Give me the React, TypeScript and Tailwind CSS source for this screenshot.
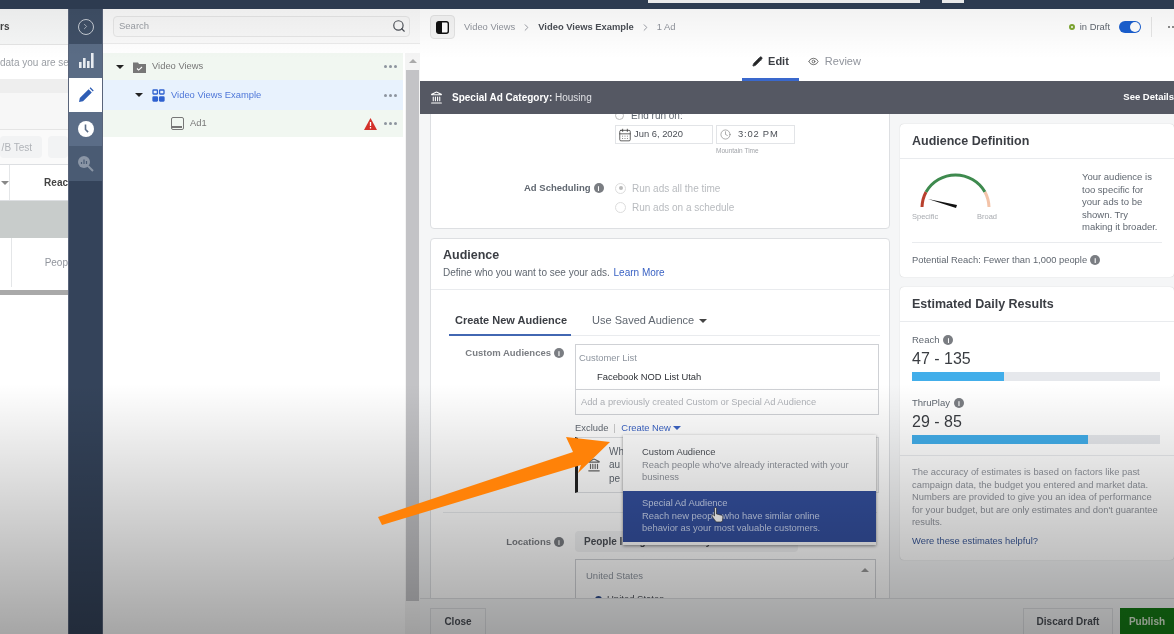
import React from "react";
import { ChevronRight, Search, Pencil, Eye, Clock, Landmark, CalendarDays } from "lucide-react";

const Info = ({ size = "w-[10px] h-[10px]" }: { size?: string }) => (
  <span className={`inline-flex ${size} items-center justify-center rounded-full bg-[#7a7d82] text-[7px] font-bold leading-none text-white`}>i</span>
);

const Dots = () => (
  <span className="flex gap-[2px]">
    <i className="h-[3px] w-[3px] rounded-full bg-[#8d949e]" />
    <i className="h-[3px] w-[3px] rounded-full bg-[#8d949e]" />
    <i className="h-[3px] w-[3px] rounded-full bg-[#8d949e]" />
  </span>
);

const Caret = ({ className = "" }: { className?: string }) => (
  <span className={`inline-block h-0 w-0 border-x-[4px] border-t-[4px] border-x-transparent ${className}`} />
);

function ClippedTable() {
  return (
    <div className="w-[68px] shrink-0 overflow-hidden bg-white text-[#606770]">
      <div className="flex h-[35px] items-center bg-[#f6f7f7] text-[10px] font-bold text-[#444]">rs</div>
      <div className="flex h-[35px] items-center whitespace-nowrap border-t border-[#e4e4e4] text-[10px] text-[#9a9ea4]">data you are se</div>
      <div className="h-[14px] bg-[#eeeeee]" />
      <div className="h-[36px] bg-[#f7f7f7]" />
      <div className="flex h-[35px] items-center gap-[6px] border-t border-[#e5e5e5] bg-[#fafafa]">
        <span className="flex h-[22px] w-[42px] items-center justify-end rounded-sm bg-[#f2f3f4] pr-[10px] text-[10px] text-[#b0b3b8]">/B Test</span>
        <span className="h-[22px] w-[20px] rounded-sm bg-[#f2f3f4]" />
      </div>
      <div className="flex h-[37px] border-y border-[#dddfe2] bg-white">
        <span className="flex w-[14px] items-center justify-center border-r border-[#e4e6e8]"><Caret className="border-t-[#888]" /></span>
        <span className="flex items-center pl-[34px] text-[10px] font-bold text-[#444]">Reac</span>
      </div>
      <div className="h-[37px] bg-[#c8cccb]" />
      <div className="flex h-[49px] bg-white">
        <span className="w-[14px] border-r border-[#e4e6e8]" />
        <span className="flex items-center pl-[33px] text-[10px] text-[#90949c]">Peop</span>
      </div>
      <div className="mt-[3px] h-[5px] bg-[#a9a9a9]" />
    </div>
  );
}

function NavRail() {
  return (
    <div className="flex w-[35px] shrink-0 flex-col border-x border-[#59647a] bg-[#34435a]">
      <div className="flex h-[35px] items-center justify-center bg-[#3f4f66]">
        <span className="flex h-[16px] w-[16px] items-center justify-center rounded-full border-[1.5px] border-[#c6ccd4]">
          <ChevronRight size={9} className="text-[#c6ccd4]" />
        </span>
      </div>
      <div className="flex h-[34px] items-center justify-center bg-[#5a6c85]">
        <svg width="16" height="16" viewBox="0 0 16 16" fill="#e8ecf1">
          <rect x="1" y="9" width="2.6" height="6" />
          <rect x="5" y="5" width="2.6" height="10" />
          <rect x="9" y="8" width="2.6" height="7" />
          <rect x="13" y="0" width="2.6" height="15" />
        </svg>
      </div>
      <div className="flex h-[34px] items-center justify-center bg-white">
        <svg width="16" height="16" viewBox="0 0 16 16" fill="#2f5eb5">
          <path d="M1 15l.8-4L10.6 2.2l3.2 3.2L5 14.2zM11.6 1.2l.9-.9 3.2 3.2-.9.9z" />
        </svg>
      </div>
      <div className="flex h-[34px] items-center justify-center bg-[#5b6d87]">
        <svg width="16" height="16" viewBox="0 0 16 16">
          <circle cx="8" cy="8" r="8" fill="#fff" />
          <path d="M7.5 3.5v5l2.6 2.6" stroke="#5b6d87" strokeWidth="1.6" fill="none" />
        </svg>
      </div>
      <div className="flex h-[35px] items-center justify-center bg-[#4a5b73]">
        <svg width="17" height="17" viewBox="0 0 17 17" fill="none">
          <circle cx="7" cy="7" r="6" fill="#8b96a6" />
          <path d="M11 11l5 5" stroke="#8b96a6" strokeWidth="2" />
          <path d="M4.5 9V7M7 9V4.5M9.5 9V6" stroke="#4a5b73" strokeWidth="1.2" />
        </svg>
      </div>
    </div>
  );
}

function TreePanel() {
  return (
    <div className="flex w-[317px] shrink-0 flex-col bg-white">
      <div className="flex h-[35px] items-center border-b border-[#ebebeb] bg-[#fafafa] pl-[10px] pr-[10px]">
        <div className="flex h-[21px] w-full items-center justify-between rounded-sm border border-[#e6e6e6] bg-[#f8f8f8] pl-[5px] pr-[3px]">
          <span className="text-[9.5px] text-[#9a9ea4]">Search</span>
          <Search size={14} className="text-[#4b4f56]" />
        </div>
      </div>
      <div className="flex min-h-0 flex-1 pt-[9px]">
        <div className="mr-[2px] min-w-0 flex-1">
          <div className="flex h-[27px] items-center bg-[#f1f7f1] pl-[13px] pr-[6px] text-[9.4px] text-[#777]">
            <Caret className="border-t-[#222]" />
            <svg className="ml-[9px]" width="13" height="12" viewBox="0 0 13 12" fill="#777">
              <path d="M0 1.5h5l1 1.5h7v9H0z" />
              <path d="M4 7.5l1.6 1.6L9 6" stroke="#fff" strokeWidth="1.1" fill="none" />
            </svg>
            <span className="ml-[6px] flex-1">Video Views</span>
            <Dots />
          </div>
          <div className="flex h-[30px] items-center bg-[#e8f2fd] pl-[32px] pr-[6px] text-[9.4px] text-[#4f77d8]">
            <Caret className="border-t-[#222]" />
            <svg className="ml-[9px]" width="13" height="13" viewBox="0 0 13 13" fill="none" stroke="#2f62d0" strokeWidth="1.3">
              <rect x="1" y="1" width="4.4" height="4" rx=".5" />
              <rect x="7.6" y="1" width="4.4" height="4" rx=".5" />
              <rect x="1" y="8" width="4.4" height="4" rx=".5" fill="#2f62d0" />
              <rect x="7.6" y="8" width="4.4" height="4" rx=".5" fill="#2f62d0" />
            </svg>
            <span className="ml-[6px] flex-1">Video Views Example</span>
            <Dots />
          </div>
          <div className="flex h-[27px] items-center bg-[#f1f7f1] pl-[68px] pr-[6px] text-[9.4px] text-[#777]">
            <span className="flex h-[13px] w-[13px] items-end justify-end rounded-[2px] border-[1.5px] border-[#777] pb-[1px] pr-[1px]">
              <i className="h-[2px] w-full bg-[#777]" />
            </span>
            <span className="ml-[6px] flex-1">Ad1</span>
            <svg className="mr-[7px]" width="13" height="12" viewBox="0 0 13 12">
              <path d="M6.5 0L13 12H0z" fill="#d3312a" />
              <path d="M6.5 4v4M6.5 9v1.5" stroke="#fff" strokeWidth="1.3" />
            </svg>
            <Dots />
          </div>
        </div>
        <div className="flex w-[15px] shrink-0 flex-col items-center bg-[#f4f4f4] pt-[6px]">
          <span className="h-0 w-0 border-x-[4px] border-b-[4px] border-x-transparent border-b-[#aaa]" />
          <div className="mt-[7px] h-[531px] w-[13px] bg-[#c3c3c6]" />
        </div>
      </div>
    </div>
  );
}

function Gauge() {
  return (
    <svg width="90" height="56" viewBox="0 0 90 56" fill="none">
      <path d="M10 39 A34 34 0 0 1 14 24" stroke="#b8402d" strokeWidth="3" />
      <path d="M14 24 A34 34 0 0 1 73 24" stroke="#3e8a4e" strokeWidth="3" />
      <path d="M73 24 A34 34 0 0 1 77 39" stroke="#f3c3a8" strokeWidth="3" />
      <path d="M16 31 L45 37 L44 40 Z" fill="#111" />
      <text x="0" y="51" fontSize="7.5" fill="#a8abb0">Specific</text>
      <text x="65" y="51" fontSize="7.5" fill="#a8abb0">Broad</text>
    </svg>
  );
}

function Bar({ label, value, pct }: { label: string; value: string; pct: string }) {
  return (
    <div>
      <div className="flex items-center gap-[4px] text-[9.5px] leading-[14px] text-[#606770]">
        {label} <Info />
      </div>
      <div className="mt-[2px] text-[16px] leading-[20px] text-[#3a3d42]">{value}</div>
      <div className="mt-[3px] h-[9px] w-[248px] bg-[#e6e8ec]">
        <div className={`h-full bg-[#42aeea] ${pct}`} />
      </div>
    </div>
  );
}

function LeftColumn() {
  return (
    <div className="w-[460px] shrink-0">
      <div className="-mt-[12px] h-[127px] rounded-b border border-[#dddfe2] bg-white pl-[184px] pt-[6px]">
        <div className="flex h-[12px] items-center gap-[7px] text-[10px] text-[#606770]">
          <span className="h-[9px] w-[9px] rounded-full border border-[#bbb]" />
          End run on:
        </div>
        <div className="mt-[4px] flex gap-[3px] text-[9.4px] text-[#4b4f56]">
          <span className="flex h-[19px] w-[98px] items-center gap-[2px] border border-[#e2e4e7] pl-[2px]">
            <CalendarDays size={14} strokeWidth={1.3} className="text-[#333]" />
            Jun 6, 2020
          </span>
          <span className="flex h-[19px] w-[79px] items-center gap-[7px] border border-[#e2e4e7] pl-[3px] tracking-[0.8px]">
            <Clock size={11} strokeWidth={1.3} className="text-[#777]" />
            3:02 PM
          </span>
        </div>
        <div className="ml-[101px] mt-[2px] text-[6.5px] text-[#a0a3a8]">Mountain Time</div>
        <div className="-ml-[91px] mt-[25px] flex items-center text-[9.5px]">
          <span className="flex w-[91px] items-center gap-[3px] font-bold text-[#606770]">
            Ad Scheduling <Info />
          </span>
          <span className="flex items-center gap-[6px] text-[10px] text-[#b8bbbf]">
            <span className="flex h-[11px] w-[11px] items-center justify-center rounded-full border border-[#ddd]">
              <i className="h-[4px] w-[4px] rounded-full bg-[#bbb]" />
            </span>
            Run ads all the time
          </span>
        </div>
        <div className="mt-[4px] flex items-center gap-[6px] text-[10px] text-[#b8bbbf]">
          <span className="h-[11px] w-[11px] rounded-full border border-[#ddd]" />
          Run ads on a schedule
        </div>
      </div>

      <div className="relative mt-[9px] h-[400px] rounded border border-[#dddfe2] bg-white">
        <div className="border-b border-[#e9ebee] px-[12px] pb-[9px] pt-[8px]">
          <div className="text-[12.5px] font-bold leading-[16px] text-[#3b3e44]">Audience</div>
          <div className="mt-[3px] text-[10px] leading-[14px] text-[#606770]">
            Define who you want to see your ads. <span className="ml-[1px] text-[#3b63c4]">Learn More</span>
          </div>
        </div>
        <div className="ml-[18px] mr-[9px] mt-[16px] flex h-[30px] items-center gap-[25px] border-b border-[#e9ebee] pl-[6px] text-[11px]">
          <span className="relative flex h-full items-center font-bold text-[#3b3e44]">
            Create New Audience
            <i className="absolute -left-[6px] -right-[4px] bottom-[-1px] h-[2px] bg-[#4267b2]" />
          </span>
          <span className="flex items-center gap-[5px] text-[#606770]">
            Use Saved Audience <Caret className="border-t-[#444]" />
          </span>
        </div>
        <div className="mt-[8px] flex">
          <div className="mt-[1px] flex h-[16px] w-[144px] items-center justify-end gap-[3px] pr-[11px] text-[9.5px] font-bold text-[#7a7d82]">
            Custom Audiences <Info />
          </div>
          <div>
            <div className="h-[71px] w-[304px] border border-[#cfd1d5]">
              <div className="h-[45px] border-b border-[#cfd1d5] pl-[3px] pt-[6px] text-[9.4px] leading-[14px]">
                <div className="text-[#8d949e]">Customer List</div>
                <div className="mt-[5px] pl-[18px] font-medium text-[#2f3237]">Facebook NOD List Utah</div>
              </div>
              <div className="pl-[5px] pt-[6px] text-[9.3px] text-[#b0b3b8]">Add a previously created Custom or Special Ad Audience</div>
            </div>
            <div className="mt-[6px] flex items-center text-[9.4px]">
              <span className="text-[#606770]">Exclude</span>
              <i className="mx-[6px] h-[9px] w-px bg-[#ccc]" />
              <span className="text-[#3b63c4]">Create New</span>
              <Caret className="ml-[2px] border-x-[4.5px] border-t-[4.5px] border-t-[#3b63c4]" />
            </div>
            <div className="mt-[2px] flex h-[56px] w-[304px] items-center border border-l-[3px] border-[#dddfe2] border-l-[#222] pl-[9px]">
              <Landmark size={14} className="text-[#666]" />
              <span className="ml-[8px] text-[10px] leading-[13.5px] text-[#606770]">
                Wh
                <br />
                au
                <br />
                pe
              </span>
            </div>
          </div>
        </div>
        <div className="mx-[12px] mt-[19px] border-t border-[#e9ebee]" />
        <div className="mt-[18px] flex">
          <div className="mt-[-1px] flex h-[21px] w-[144px] items-center justify-end gap-[3px] pr-[11px] pt-[3px] text-[9.5px] font-bold text-[#7a7d82]">
            Locations <Info />
          </div>
          <div>
            <div className="flex h-[21px] w-[223px] items-center rounded-sm bg-[#f2f3f4] pl-[9px] text-[10px] font-bold text-[#4b4f56]">People living in or recently in this location</div>
            <div className="relative mt-[7px] h-[60px] w-[301px] border border-[#cfd1d5] pl-[10px] pt-[9px] text-[9.5px] text-[#8d949e]">
              United States
              <span className="absolute right-[6px] top-[8px] h-0 w-0 border-x-[4px] border-b-[4px] border-x-transparent border-b-[#999]" />
              <div className="mt-[9px] flex items-center gap-[5px] pl-[9px] text-[#4b4f56]">
                <i className="h-[7px] w-[7px] rounded-full bg-[#2d4a8a]" /> United States
              </div>
            </div>
          </div>
        </div>

        <div className="absolute left-[192px] top-[196px] z-10 w-[253px] bg-white shadow-[0_1px_3px_rgba(0,0,0,0.45)]">
          <div className="h-[56px] pl-[19px] pt-[11px] text-[9.4px] leading-[12.5px] text-[#90949c]">
            <div className="text-[#4b4f56]">Custom Audience</div>
            <div>Reach people who've already interacted with your</div>
            <div>business</div>
          </div>
          <div className="h-[51px] bg-[#34509f] pl-[19px] pt-[6px] text-[9.4px] leading-[12.5px] text-[#c8d3ee]">
            <div>Special Ad Audience</div>
            <div>Reach new people who have similar online</div>
            <div>behavior as your most valuable customers.</div>
          </div>
          <div className="h-[3px] bg-white" />
          <svg className="absolute left-[88px] top-[72px]" width="13" height="16" viewBox="0 0 13 16">
            <path d="M3.5 1.2c0-1 2-1 2 0V7l5 1.2c1 .3 1.5 1 1.4 2l-.4 3.4c-.1.9-.8 1.4-1.6 1.4H6c-.7 0-1.2-.3-1.6-.9L1 9.2c-.6-1 .7-2 1.6-1.1l.9.9z" fill="#fff" stroke="#333" strokeWidth=".7" />
          </svg>
        </div>
      </div>
    </div>
  );
}

function RightColumn() {
  return (
    <div className="ml-[10px] w-[274px] shrink-0 pt-[10px]">
      <div className="h-[153px] rounded bg-white shadow-[0_0_1px_rgba(0,0,0,0.25)]">
        <div className="flex h-[35px] items-center border-b border-[#e9ebee] pl-[12px] text-[12.5px] font-bold text-[#3b3e44]">Audience Definition</div>
        <div className="mx-[12px] flex h-[84px] justify-between border-b border-[#e9ebee] pt-[9px]">
          <Gauge />
          <p className="mr-[1px] w-[79px] pt-[3px] text-[9.5px] leading-[12.5px] text-[#606770]">Your audience is too specific for your ads to be shown. Try making it broader.</p>
        </div>
        <div className="flex h-[34px] items-center gap-[3px] pl-[12px] text-[9.4px] text-[#606770]">
          Potential Reach: Fewer than 1,000 people <Info />
        </div>
      </div>
      <div className="mt-[10px] h-[273px] rounded bg-white shadow-[0_0_1px_rgba(0,0,0,0.25)]">
        <div className="flex h-[35px] items-center border-b border-[#e9ebee] pl-[12px] text-[12.5px] font-bold text-[#3b3e44]">Estimated Daily Results</div>
        <div className="flex h-[134px] flex-col gap-[15px] border-b border-[#e9ebee] pl-[12px] pt-[11px]">
          <Bar label="Reach" value="47 - 135" pct="w-[37%]" />
          <Bar label="ThruPlay" value="29 - 85" pct="w-[71%]" />
        </div>
        <p className="w-[262px] pl-[12px] pt-[10px] text-[9.4px] leading-[12.5px] text-[#90949c]">
          The accuracy of estimates is based on factors like past campaign data, the budget you entered and market data. Numbers are provided to give you an idea of performance for your budget, but are only estimates and don't guarantee results.
        </p>
        <p className="pl-[12px] pt-[5px] text-[9.4px] text-[#3b5998]">Were these estimates helpful?</p>
      </div>
    </div>
  );
}

function MainPanel() {
  return (
    <div className="flex min-w-0 flex-1 flex-col bg-[#f5f6f7]">
      <div className="h-[72px] shrink-0 bg-white">
        <div className="flex h-[36px] items-center pl-[10px] text-[9.4px] text-[#90949c]">
          <span className="flex h-[24px] w-[25px] items-center justify-center rounded-sm border border-[#e4e4e4] bg-[#f5f5f5]">
            <svg width="13" height="13" viewBox="0 0 13 13">
              <rect x=".7" y=".7" width="11.6" height="11.6" rx="2" fill="#fff" stroke="#111" strokeWidth="1.4" />
              <rect x="1" y="1" width="5" height="11" fill="#111" />
            </svg>
          </span>
          <span className="ml-[9px]">Video Views</span>
          <ChevronRight size={11} className="mx-[6px]" />
          <span className="font-bold text-[#4b4f56]">Video Views Example</span>
          <ChevronRight size={11} className="mx-[6px]" />
          <span>1 Ad</span>
          <span className="ml-auto flex items-center gap-[5px] text-[#606770]">
            <i className="h-[6px] w-[6px] rounded-full border-[2px] border-[#7fa832]" />
            in Draft
          </span>
          <span className="ml-[9px] flex h-[12px] w-[22px] items-center justify-end rounded-full bg-[#1a5fd0] pr-[1px]">
            <i className="h-[10px] w-[10px] rounded-full bg-white" />
          </span>
          <i className="ml-[10px] h-[20px] w-px bg-[#e6e6e6]" />
          <span className="ml-[16px] flex gap-[2px]">
            <i className="h-[2px] w-[2px] rounded-full bg-[#666]" />
            <i className="h-[2px] w-[2px] rounded-full bg-[#666]" />
          </span>
        </div>
        <div className="flex h-[36px] justify-center pl-[9px] text-[11px]">
          <div className="flex items-center gap-[5px] border-b-[3px] border-[#3a68cc] px-[10px] font-bold text-[#3b3e44]">
            <Pencil size={11} fill="#222" />
            Edit
          </div>
          <div className="ml-[9px] flex items-center gap-[6px] pb-[3px] text-[#90949c]">
            <Eye size={11} className="text-[#666]" />
            Review
          </div>
        </div>
      </div>
      <div className="z-10 flex h-[33px] shrink-0 items-center justify-between bg-[#555863] pl-[10px] text-[10px] text-white">
        <span className="flex items-center gap-[9px]">
          <Landmark size={13} />
          <span>
            <b>Special Ad Category:</b> <span className="text-[#dfe0e4]">Housing</span>
          </span>
        </span>
        <b className="whitespace-nowrap text-[9.5px]">See Details</b>
      </div>
      <div className="flex min-h-0 flex-1 overflow-hidden pl-[10px]">
        <LeftColumn />
        <RightColumn />
      </div>
      <div className="z-10 flex h-[36px] shrink-0 items-end justify-between border-t border-[#dddfe2] bg-[#f5f6f7] pl-[10px] text-[10px] font-bold text-[#4b4f56]">
        <span className="flex h-[26px] w-[56px] items-center justify-center border border-[#dddfe2] border-b-0 bg-[#f5f6f7]">Close</span>
        <span className="flex">
          <span className="flex h-[26px] w-[90px] items-center justify-center border border-[#dddfe2] border-b-0">Discard Draft</span>
          <span className="ml-[7px] flex h-[26px] w-[54px] items-center justify-center bg-[#157a15] text-[#d8e8d0]">Publish</span>
        </span>
      </div>
    </div>
  );
}

export default function App() {
  return (
    <div className="relative flex h-[634px] w-[1174px] flex-col overflow-hidden font-['Liberation_Sans',Arial,sans-serif] blur-[0.5px]">
      <div className="relative h-[9px] shrink-0 bg-[#2d3b50]">
        <i className="absolute left-[648px] top-0 h-[3px] w-[272px] bg-[#e9e9e9]" />
        <i className="absolute left-[942px] top-0 h-[3px] w-[22px] bg-[#e9e9e9]" />
      </div>
      <div className="flex min-h-0 flex-1">
        <ClippedTable />
        <NavRail />
        <TreePanel />
        <MainPanel />
      </div>

      {/* video vignette sits over the whole frame */}
      <div className="pointer-events-none absolute inset-x-0 top-[9px] z-20 h-[50px] bg-gradient-to-b from-black/5 to-transparent" />
      <div className="pointer-events-none absolute inset-x-0 bottom-0 z-20 h-[250px] bg-gradient-to-b from-transparent to-black/35" />

      <svg className="pointer-events-none absolute left-0 top-0 z-30" width="1174" height="634" viewBox="0 0 1174 634">
        <path d="M378 517L573 452L566 437L610 442L578 473L581 465L382 525Z" fill="#ff8208" />
      </svg>
    </div>
  );
}
